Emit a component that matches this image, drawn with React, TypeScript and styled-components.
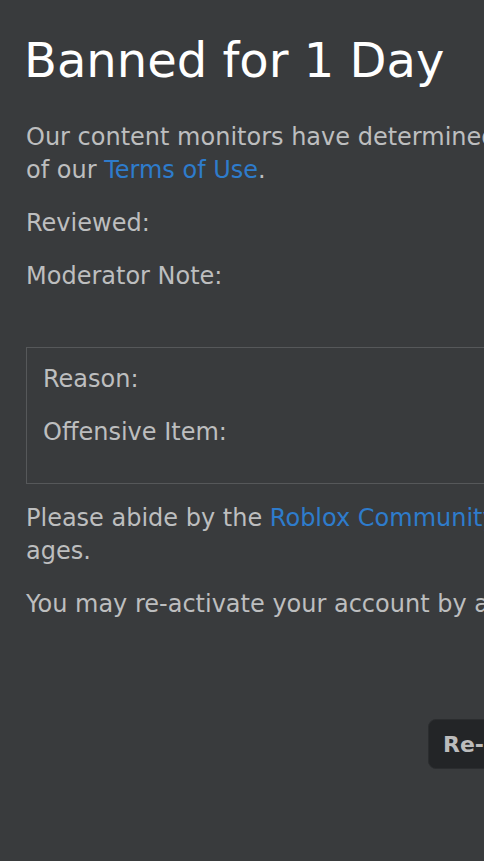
import React from 'react';
import styled, { createGlobalStyle } from 'styled-components';

const GlobalStyle = createGlobalStyle`
  html, body {
    margin: 0;
    padding: 0;
    background: #393b3d;
    overflow: hidden;
  }
`;

const Page = styled.div`
  width: 1400px;
  min-height: 861px;
  background: #393b3d;
  padding: 32px 26px 40px 26px;
  box-sizing: border-box;
  font-family: "DejaVu Sans", "Noto Sans", sans-serif;
  color: #bdbebf;
  white-space: nowrap;
`;

const Title = styled.h1`
  margin: 0 0 33px -2px;
  font-size: 48px;
  line-height: 56px;
  font-weight: 400;
  color: #ffffff;
`;

const Text = styled.p`
  margin: 0 0 20px 0;
  font-size: 24px;
  line-height: 33px;
  color: #bdbebf;
`;

const Link = styled.a`
  color: #2e7ccc;
  text-decoration: none;
`;

const NoteSpacer = styled.div`
  height: 34px;
`;

const InfoBox = styled.div`
  border: 1px solid #56585a;
  padding: 15px 16px 14px 16px;
  margin: 0 0 18px 0;
`;

const ButtonRow = styled.div`
  display: flex;
  padding: 78px 0 0 402px;
`;

const ActionButton = styled.button`
  height: 50px;
  padding: 0 14px;
  background: #232527;
  border: 1px solid #2b2d2f;
  border-radius: 8px;
  color: #bcbcbc;
  font-family: "DejaVu Sans", "Noto Sans", sans-serif;
  font-size: 22px;
  font-weight: 700;
  white-space: nowrap;
`;

const App: React.FC = () => {
  return (
    <>
      <GlobalStyle />
      <Page>
        <Title>Banned for 1 Day</Title>
        <Text>
          Our content monitors have determined that your behavior at Roblox has been in violation
          <br />
          of our <Link href="#">Terms of Use</Link>.
        </Text>
        <Text>Reviewed:</Text>
        <Text>Moderator Note:</Text>
        <NoteSpacer />
        <InfoBox>
          <Text>Reason:</Text>
          <Text>Offensive Item:</Text>
        </InfoBox>
        <Text>
          Please abide by the <Link href="#">Roblox Community Standards</Link> so that Roblox can be fun for users of all
          <br />
          ages.
        </Text>
        <Text>You may re-activate your account by agreeing to our Terms of Use.</Text>
        <ButtonRow>
          <ActionButton type="button">Re-activate My Account</ActionButton>
        </ButtonRow>
      </Page>
    </>
  );
};

export default App;
